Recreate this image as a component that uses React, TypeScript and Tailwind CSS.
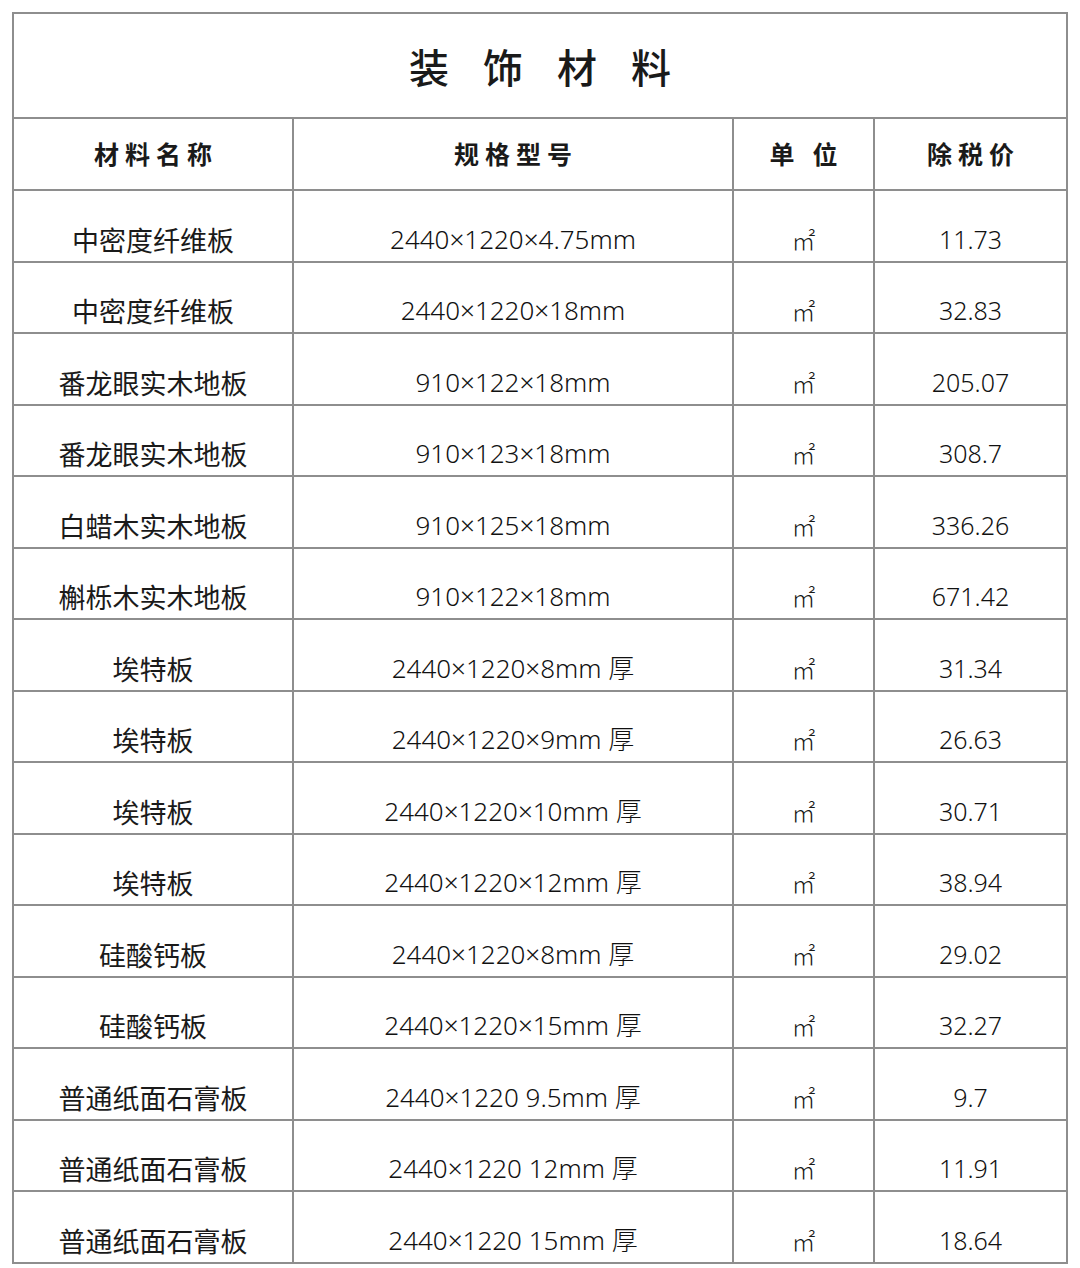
import React from "react";

const rows: [string, string, string][] = [
  ["中密度纤维板", "2440×1220×4.75mm", "11.73"],
  ["中密度纤维板", "2440×1220×18mm", "32.83"],
  ["番龙眼实木地板", "910×122×18mm", "205.07"],
  ["番龙眼实木地板", "910×123×18mm", "308.7"],
  ["白蜡木实木地板", "910×125×18mm", "336.26"],
  ["槲栎木实木地板", "910×122×18mm", "671.42"],
  ["埃特板", "2440×1220×8mm 厚", "31.34"],
  ["埃特板", "2440×1220×9mm 厚", "26.63"],
  ["埃特板", "2440×1220×10mm 厚", "30.71"],
  ["埃特板", "2440×1220×12mm 厚", "38.94"],
  ["硅酸钙板", "2440×1220×8mm 厚", "29.02"],
  ["硅酸钙板", "2440×1220×15mm 厚", "32.27"],
  ["普通纸面石膏板", "2440×1220 9.5mm 厚", "9.7"],
  ["普通纸面石膏板", "2440×1220 12mm 厚", "11.91"],
  ["普通纸面石膏板", "2440×1220 15mm 厚", "18.64"],
];

const font = { fontFamily: '"Noto Sans CJK SC", "Noto Sans", sans-serif' };
const latin = { fontFamily: '"Noto Sans", "Noto Sans CJK SC", sans-serif' };

export default function App() {
  return (
    <div className="w-[1080px] h-[1268px] bg-white pt-[12px] pl-[12px]" style={font}>
      <div className="w-[1056px] border-2 border-[#8e8e8e] border-b-0 text-[#1a1a1a]">
        <div className="h-[105px] flex items-center justify-center border-b-2 border-[#8e8e8e]">
          <span className="text-[40px] font-medium tracking-[34px] mr-[-34px] leading-none">装饰材料</span>
        </div>
        <div className="flex h-[72px] border-b-2 border-[#8e8e8e] font-bold text-[25px]">
          <div className="w-[280px] flex items-center justify-center border-r-2 border-[#8e8e8e]">
            <span className="tracking-[6px] mr-[-6px]">材料名称</span>
          </div>
          <div className="w-[440px] flex items-center justify-center border-r-2 border-[#8e8e8e]">
            <span className="tracking-[6px] mr-[-6px]">规格型号</span>
          </div>
          <div className="w-[141px] flex items-center justify-center border-r-2 border-[#8e8e8e]">
            <span className="tracking-[18px] mr-[-18px]">单位</span>
          </div>
          <div className="flex-1 flex items-center justify-center">
            <span className="tracking-[6px] mr-[-6px]">除税价</span>
          </div>
        </div>
        {rows.map((r, i) => (
          <div key={i} className="flex h-[71.5px] border-b-2 border-[#8e8e8e] leading-none">
            <div className="w-[280px] flex items-end justify-center pb-[8px] border-r-2 border-[#8e8e8e]">
              <span className="text-[27px]">{r[0]}</span>
            </div>
            <div className="w-[440px] flex items-end justify-center pb-[9px] border-r-2 border-[#8e8e8e]">
              <span className="text-[26px] font-light text-[#111]" style={latin}>{r[1]}</span>
            </div>
            <div className="w-[141px] flex items-end justify-center pb-[9px] border-r-2 border-[#8e8e8e]">
              <span className="text-[24px] font-light">㎡</span>
            </div>
            <div className="flex-1 flex items-end justify-center pb-[9px]">
              <span className="text-[25px] font-light text-[#111]" style={latin}>{r[2]}</span>
            </div>
          </div>
        ))}
      </div>
    </div>
  );
}
